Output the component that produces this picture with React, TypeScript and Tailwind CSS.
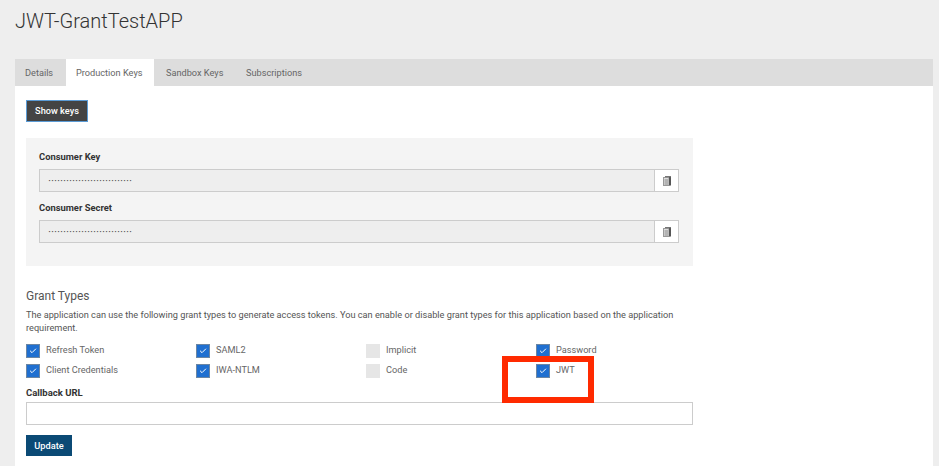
import { Check } from "lucide-react";

const grants = [
  { label: "Refresh Token", checked: true },
  { label: "SAML2", checked: true },
  { label: "Implicit", checked: false },
  { label: "Password", checked: true },
  { label: "Client Credentials", checked: true },
  { label: "IWA-NTLM", checked: true },
  { label: "Code", checked: false },
  { label: "JWT", checked: true },
];

function ClipboardIcon() {
  return (
    <svg width="8" height="10" viewBox="0 0 8 10" className="block">
      <rect x="0.5" y="1.5" width="5.5" height="8" fill="#ddd" stroke="#999" />
      <path d="M1.5 4h3.5M1.5 6h3.5M1.5 8h3.5" stroke="#777" strokeWidth="0.8" />
      <path d="M6 1h2v8.5H6z" fill="#555" />
      <path d="M2 0h6v1.2H2z" fill="#777" />
    </svg>
  );
}

function KeyField({ label }: { label: string }) {
  return (
    <div>
      <div className="text-[9.4px] font-bold leading-[12px] text-[#333]">{label}</div>
      <div className="mt-[6px] flex h-[23px]">
        <div className="flex w-[616px] items-center border border-[#ccc] bg-[#eee] pl-2 text-[#444]">
          {"•".repeat(28).split("").map((c, i) => (
            <span key={i} className="w-[3px] text-center text-[6px] leading-none">
              {c}
            </span>
          ))}
        </div>
        <div className="flex w-[24px] items-center justify-center border border-l-0 border-[#ccc] bg-white">
          <ClipboardIcon />
        </div>
      </div>
    </div>
  );
}

function GrantCheck({ label, checked }: { label: string; checked: boolean }) {
  return (
    <div className="flex h-[14px] items-start gap-[6px]">
      {checked ? (
        <span className="flex h-[14px] w-[14px] items-center justify-center border border-[#6b86a3] bg-[#1f6fd0]">
          <Check size={8} strokeWidth={3} className="text-white" />
        </span>
      ) : (
        <span className="h-[14px] w-[14px] bg-[#e6e6e6]" />
      )}
      <span className="text-[9.2px] leading-[12px] text-[#666]">{label}</span>
    </div>
  );
}

export default function App() {
  return (
    <div className="relative h-[466px] w-[939px] overflow-hidden bg-[#eee] pl-[15px] pr-[6px] font-['Roboto',sans-serif]">
      <h1 className="h-[59px] pt-[8px] text-[20px] font-light leading-[27px] text-[#333]">JWT-GrantTestAPP</h1>

      <div className="flex h-[27px] items-center bg-[#ddd] text-[9.2px] text-[#666]">
        <div className="w-[51px] pl-[10px]">Details</div>
        <div className="flex h-full w-[88px] items-center bg-white pl-[10px]">Production Keys</div>
        <div className="w-[92px] pl-[12px]">Sandbox Keys</div>
        <div>Subscriptions</div>
      </div>

      <div className="h-[380px] bg-white pl-[11px] pt-[14px]">
        <button className="block h-[22px] w-[62px] border border-[#5b9bd5] bg-[#444] text-[9.2px] font-medium text-white">
          Show keys
        </button>

        <div className="mt-[16px] flex h-[128px] w-[667px] flex-col gap-[10px] bg-[#f4f4f4] px-[13px] pt-[13px]">
          <KeyField label="Consumer Key" />
          <KeyField label="Consumer Secret" />
        </div>

        <div className="mt-[22px] text-[12px] leading-[16px] text-[#555]">Grant Types</div>
        <p className="mt-[4px] w-[667px] text-[9.2px] leading-[13px] text-[#555]">
          The application can use the following grant types to generate access tokens. You can enable or disable grant
          types for this application based on the application requirement.
        </p>

        <div className="mt-[10px] grid grid-cols-[170px_170px_170px_170px] gap-y-[6px]">
          {grants.map((g) => (
            <GrantCheck key={g.label} label={g.label} checked={g.checked} />
          ))}
        </div>

        <div className="mt-[9px] text-[9.5px] font-bold leading-[12px] text-[#333]">Callback URL</div>
        <div className="mt-[3px] h-[23px] w-[667px] border border-[#ccc] bg-white" />

        <button className="mt-[10px] block h-[21px] w-[46px] bg-[#0b4a75] text-[9.2px] font-medium text-white">
          Update
        </button>
      </div>

      <div className="absolute left-[502px] top-[356px] h-[47px] w-[92px] border-[6px] border-[#ff2a00]" />
    </div>
  );
}
